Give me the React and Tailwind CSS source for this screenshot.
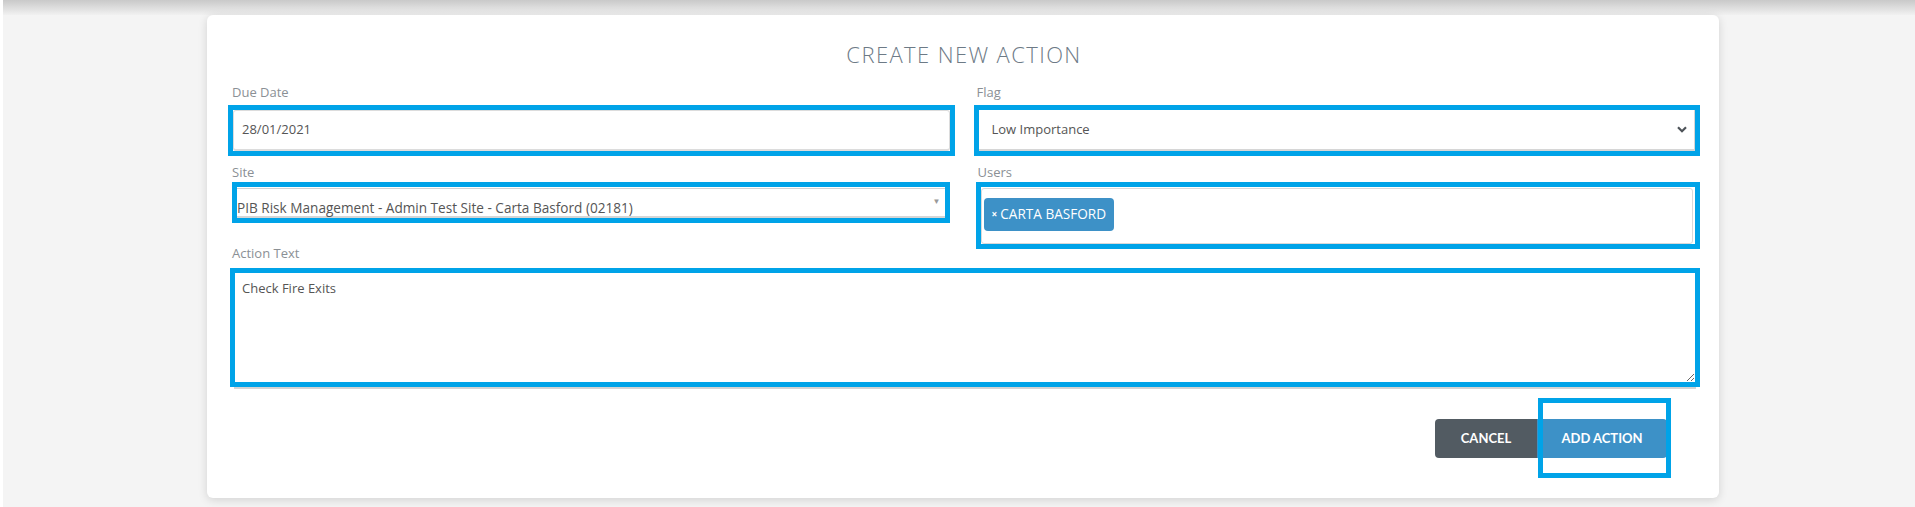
import React from "react";

function Label({ children, className = "" }) {
  return (
    <div className={"h-[15px] text-[13px] leading-[15px] text-[#8b9095] " + className}>
      {children}
    </div>
  );
}

function Chevron() {
  return (
    <svg width="10" height="7" viewBox="0 0 10 7" className="shrink-0">
      <path d="M1 1.2 L5 5.2 L9 1.2" fill="none" stroke="#4d5358" strokeWidth="2.2" />
    </svg>
  );
}

export default function App() {
  return (
    <div className="h-screen overflow-hidden w-full bg-[#f4f4f4] border-l-[3px] border-white font-['Open_Sans',sans-serif]">
      {/* shadow from the header above */}
      <div className="h-[15px] bg-linear-to-b from-[#c9c9c9] to-[#f1f1f1]"></div>

      <div className="ml-[204px] w-[1512px] bg-white rounded-[6px] shadow-[0_2px_10px_rgba(0,0,0,0.14)] pt-[26px] pb-[40px] pl-[21px] pr-[19px]">
        <h2 className="h-[27px] text-center text-[22px] leading-[27px] font-light tracking-[1.4px] text-[#6d7a86]">
          CREATE NEW ACTION
        </h2>

        <div className="mt-[17px] grid grid-cols-2 gap-x-[19px]">
          {/* due date */}
          <div>
            <Label className="pl-[4px]">Due Date</Label>
            <div className="mt-[5px] h-[51px] border-[5px] border-[#00a3e8]">
              <div className="h-full flex items-center rounded-[3px] border border-b-2 border-[#dcdcdc] pl-[8px] text-[13px] text-[#555]">
                28/01/2021
              </div>
            </div>
          </div>

          {/* flag */}
          <div>
            <Label className="pl-[3px]">Flag</Label>
            <div className="mt-[5px] h-[51px] border-[5px] border-[#00a3e8]">
              <div className="h-full flex items-center justify-between border-r border-b-2 border-[#d6d6d6] pl-[13px] pr-[7px] text-[13px] text-[#555]">
                <span>Low Importance</span>
                <Chevron />
              </div>
            </div>
          </div>

          {/* site */}
          <div className="mt-[9px]">
            <Label className="pl-[4px]">Site</Label>
            <div className="mt-[2px] ml-[4px] mr-[5px] h-[41px] border-[5px] border-[#00a3e8]">
              <div className="h-full flex flex-col pt-[1px]">
                <div className="border-t border-[#d2d2d2]"></div>
                <div className="flex-1 flex items-end justify-between border-b-2 border-[#d6d6d6] pr-[4px]">
                  <span className="text-[13.6px] leading-[17px] text-[#555] whitespace-nowrap">
                    PIB Risk Management - Admin Test Site - Carta Basford (02181)
                  </span>
                  <span className="self-center text-[8px] text-[#999] mb-[4px]">▼</span>
                </div>
              </div>
            </div>
          </div>

          {/* users */}
          <div className="mt-[9px]">
            <Label className="pl-[4px]">Users</Label>
            <div className="mt-[2px] ml-[2px] h-[67px] border-[5px] border-[#00a3e8]">
              <div className="mt-[1px] mr-[2px] h-[56px] rounded-[3px] border border-[#d9d9d9] pt-[9px] pl-[2px]">
                <span className="inline-flex h-[33px] items-center gap-[3px] rounded-[4px] bg-[#3d91c7] px-[8px] text-[13.6px] text-white">
                  <span className="text-[10px] font-bold">×</span>
                  CARTA BASFORD
                </span>
              </div>
            </div>
          </div>

          {/* action text */}
          <div className="col-span-2 mt-[-3px]">
            <Label className="pl-[4px]">Action Text</Label>
            <div className="mt-[7px] ml-[2px] h-[119px] border-[5px] border-[#00a3e8] shadow-[0_6px_0_-4px_#d4d4d4]">
              <textarea
                className="block h-full w-full px-[7px] pt-[6px] text-[13px] leading-[18px] text-[#555] outline-none"
                defaultValue="Check Fire Exits"
              />
            </div>
          </div>
        </div>

        <div className="mt-[32px] flex justify-end pr-[33px] font-['Lato',sans-serif]">
          <button className="h-[39px] w-[102px] rounded-l-[4px] bg-[#525b62] text-[13px] font-bold text-white">
            CANCEL
          </button>
          <div className="relative">
            <button className="h-[39px] w-[130px] rounded-r-[4px] bg-[#3d91c7] text-[13px] font-bold text-white">
              ADD ACTION
            </button>
            <div className="absolute -top-[21px] -bottom-[20px] left-[1px] -right-[4px] border-[5px] border-[#00a3e8]"></div>
          </div>
        </div>
      </div>
    </div>
  );
}
